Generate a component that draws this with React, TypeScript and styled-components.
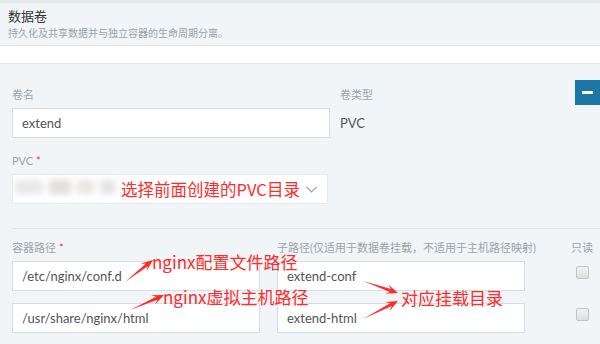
import React from "react";
import styled, { createGlobalStyle } from "styled-components";

const GlobalStyle = createGlobalStyle`
  body {
    margin: 0;
    background: #ffffff;
    font-family: "Lato", "Noto Sans CJK SC", sans-serif;
  }
`;

const Page = styled.div`
  width: 600px;
  height: 344px;
  overflow: hidden;
  border-top: 3px solid #e4e9ec;
  box-sizing: border-box;
`;

const Header = styled.div`
  height: 43px;
  background: #f2f5f7;
  border-bottom: 1px solid #e2e7ea;
  box-sizing: border-box;
  padding: 5px 8px 0;
`;

const Title = styled.div`
  font-size: 13px;
  line-height: 16px;
  color: #333;
`;

const Subtitle = styled.div`
  font-size: 10px;
  line-height: 14px;
  margin-top: 2px;
  color: #9aa3a9;
`;

const Spacer = styled.div`
  height: 17px;
  border-bottom: 1px solid #e2e7ea;
`;

const Panel = styled.div`
  position: relative;
  background: #f2f5f7;
  height: 280px;
  padding: 24px 0 0 12px;
  box-sizing: border-box;
`;

const Row = styled.div<{ $cols: string; $gap?: number }>`
  display: grid;
  grid-template-columns: ${(p) => p.$cols};
  column-gap: ${(p) => p.$gap ?? 10}px;
`;

const Label = styled.div<{ $ml?: number }>`
  font-size: 11px;
  line-height: 14px;
  height: 14px;
  color: #9aa3a9;
  margin: 0 0 6px ${(p) => p.$ml ?? 0}px;
  white-space: nowrap;
`;

const Star = styled.span`
  color: #e03a3a;
  margin-left: 3px;
`;

const Input = styled.div<{ $mt?: number }>`
  height: 30px;
  box-sizing: border-box;
  background: #fff;
  border: 1px solid #d5dde2;
  padding: 0 9px;
  display: flex;
  align-items: center;
  font-size: 13px;
  color: #555;
  margin-top: ${(p) => p.$mt ?? 0}px;
`;

const Value = styled.div`
  font-size: 13px;
  color: #555;
  height: 30px;
  display: flex;
  align-items: center;
`;

const Field = styled.div<{ $mt?: number }>`
  margin-top: ${(p) => p.$mt ?? 0}px;
`;

const Select = styled(Input)`
  width: 316px;
  border-color: #e6ebee;
  justify-content: space-between;
  padding: 0 10px 0 2px;
`;

const Blurred = styled.div`
  width: 100px;
  height: 18px;
  filter: blur(3px);
  display: flex;
  gap: 6px;
  opacity: 0.8;
`;

const Blob = styled.div<{ $w: number; $c: string }>`
  width: ${(p) => p.$w}px;
  height: 14px;
  background: ${(p) => p.$c};
`;

const Note = styled.span<{ $size?: number }>`
  color: #ff2b2b;
  font-family: "Noto Sans CJK SC", sans-serif;
  font-size: ${(p) => p.$size ?? 17}px;
  white-space: nowrap;
  line-height: 1;
`;

const FloatNote = styled(Note)<{ $x: number; $y: number }>`
  position: absolute;
  left: ${(p) => p.$x}px;
  top: ${(p) => p.$y}px;
`;

const Divider = styled.div`
  height: 1px;
  background: #dde3e7;
  margin: 24px 0 12px;
`;

const MinusButton = styled.div`
  position: absolute;
  top: 16px;
  right: 0;
  width: 25px;
  height: 25px;
  background: #1a77a6;
  display: flex;
  align-items: center;
  justify-content: center;
  &::after {
    content: "";
    width: 11px;
    height: 3px;
    background: #fff;
  }
`;

const CheckCell = styled.div`
  display: flex;
  flex-direction: column;
`;

const CheckBox = styled.div<{ $mt: number }>`
  width: 11px;
  height: 11px;
  border: 1px solid #bfc5c9;
  border-radius: 2px;
  background: linear-gradient(#f2f2f2, #dedede);
  margin: ${(p) => p.$mt}px 0 0 34px;
`;

const Overlay = styled.svg`
  position: absolute;
  left: 0;
  top: 0;
  pointer-events: none;
`;

const Arrow: React.FC<{ x1: number; y1: number; x2: number; y2: number }> = ({ x1, y1, x2, y2 }) => {
  const dx = x2 - x1;
  const dy = y2 - y1;
  const len = Math.hypot(dx, dy);
  const ux = dx / len;
  const uy = dy / len;
  const px = -uy;
  const py = ux;
  const hb = 12;
  const bx = x2 - ux * hb;
  const by = y2 - uy * hb;
  const nx = x2 - ux * (hb - 4);
  const ny = y2 - uy * (hb - 4);
  const pts = [
    [x1, y1],
    [nx + px * 1.6, ny + py * 1.6],
    [bx + px * 5, by + py * 5],
    [x2, y2],
    [bx - px * 5, by - py * 5],
    [nx - px * 1.6, ny - py * 1.6],
  ]
    .map((p) => p.join(","))
    .join(" ");
  return <polygon points={pts} fill="#ff2b2b" />;
};

const App: React.FC = () => {
  return (
    <Page>
      <GlobalStyle />
      <Header>
        <Title>数据卷</Title>
        <Subtitle>持久化及共享数据并与独立容器的生命周期分离。</Subtitle>
      </Header>
      <Spacer />
      <Panel>
        <MinusButton />
        <Row $cols="318px 1fr">
          <div>
            <Label>卷名</Label>
            <Input>extend</Input>
          </div>
          <div>
            <Label>卷类型</Label>
            <Value>PVC</Value>
          </div>
        </Row>
        <Field $mt={16}>
          <Label>
            PVC<Star>*</Star>
          </Label>
          <Select>
            <Blurred>
              <Blob $w={30} $c="#e2e2e2" />
              <Blob $w={24} $c="#d8d6d2" />
              <Blob $w={18} $c="#e4e0da" />
              <Blob $w={16} $c="#dcdcdc" />
            </Blurred>
            <Note $size={16.5}>选择前面创建的PVC目录</Note>
            <svg width="11" height="7" viewBox="0 0 11 7">
              <polyline points="0.5,0.8 5.5,5.8 10.5,0.8" fill="none" stroke="#8fa3b0" strokeWidth="1.2" />
            </svg>
          </Select>
        </Field>
        <Divider />
        <Row $cols="248px 248px 1fr" $gap={17}>
          <div>
            <Label>
              容器路径<Star>*</Star>
            </Label>
            <Input>/etc/nginx/conf.d</Input>
            <Input $mt={12}>/usr/share/nginx/html</Input>
          </div>
          <div>
            <Label>子路径(仅适用于数据卷挂载，不适用于主机路径映射)</Label>
            <Input>extend-conf</Input>
            <Input $mt={12}>extend-html</Input>
          </div>
          <CheckCell>
            <Label $ml={29}>只读</Label>
            <CheckBox $mt={5} />
            <CheckBox $mt={29} />
          </CheckCell>
        </Row>
        <FloatNote $x={152} $y={189}>nginx配置文件路径</FloatNote>
        <FloatNote $x={163} $y={224}>nginx虚拟主机路径</FloatNote>
        <FloatNote $x={401} $y={225}>对应挂载目录</FloatNote>
        <Overlay width="600" height="280">
          <Arrow x1={125} y1={218} x2={153} y2={196} />
          <Arrow x1={130} y1={246} x2={164} y2={231} />
          <Arrow x1={363} y1={217} x2={398} y2={229} />
          <Arrow x1={363} y1={255} x2={398} y2={237} />
        </Overlay>
      </Panel>
    </Page>
  );
};

export default App;
